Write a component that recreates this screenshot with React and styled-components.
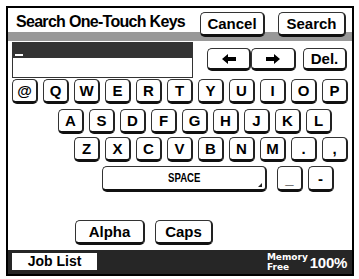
import React from "react";
import styled, { createGlobalStyle } from "styled-components";

const Global = createGlobalStyle`
  html, body { margin: 0; padding: 0; background: #fff; }
  body { font-family: "Liberation Sans", Arial, sans-serif; }
`;

const Frame = styled.div`
  position: relative;
  margin: 6px 0 0 6px;
  width: 344px;
  height: 266px;
  border: 2px solid #000;
  background: #fff;
  display: flex;
  flex-direction: column;
`;

const Header = styled.div`
  display: grid;
  flex-shrink: 0;
  height: 33px;
  grid-template-columns: 1fr 65px 13px 68px 6px;
  grid-template-rows: 24px 9px;
`;

const Stripe = styled.div`
  grid-row: 2;
  grid-column: 1 / -1;
  height: 9px;
  background-color: #999999;
`;

const Title = styled.div`
  grid-row: 1;
  grid-column: 1;
  font-weight: bold;
  font-size: 16px;
  letter-spacing: -0.7px;
  margin: 5px 0 0 8px;
  white-space: nowrap;
`;

const Btn = styled.div`
  box-sizing: border-box;
  flex-shrink: 0;
  width: ${(p) => p.w}px;
  height: ${(p) => p.h || 25}px;
  margin-left: ${(p) => p.ml || 0}px;
  margin-top: ${(p) => p.mt || 0}px;
  background: #fff;
  border: 1px solid #333;
  border-bottom: 3px solid #111;
  border-right: 2px solid #222;
  border-radius: 5px;
  display: flex;
  align-items: center;
  justify-content: center;
  font-weight: bold;
  font-size: ${(p) => p.fs || 15}px;
  color: #000;
  position: relative;
  z-index: 1;
`;

const HeadBtn = styled(Btn)`
  grid-row: 1 / 3;
  grid-column: ${(p) => p.col};
  align-self: start;
`;

const InputRow = styled.div`
  display: flex;
  margin-top: 1px;
`;

const Field = styled.div`
  margin-left: 4px;
  width: 181px;
  display: flex;
  flex-direction: column;
`;

const FieldTop = styled.div`
  height: 16px;
  background: #333;
  position: relative;
`;

const Cursor = styled.div`
  position: absolute;
  left: 3px;
  bottom: 2px;
  width: 8px;
  height: 2px;
  background: #fff;
`;

const FieldBody = styled.div`
  box-sizing: border-box;
  height: 20px;
  border: 1px solid #333;
  border-top: none;
  background: #fff;
`;

const Arrows = styled.div`
  display: flex;
  margin-left: 14px;
  margin-top: 6px;
`;

const Row = styled.div`
  display: flex;
  gap: 5px;
  padding-left: ${(p) => p.pl}px;
  margin-top: ${(p) => p.mt}px;
`;

const Corner = styled.div`
  position: absolute;
  right: 3px;
  bottom: 2px;
  width: 0;
  height: 0;
  border-left: 4px solid transparent;
  border-bottom: 4px solid #222;
`;

const SpaceLabel = styled.span`
  font-size: 12px;
  font-weight: bold;
  transform: scaleX(0.8);
`;

const Bottom = styled.div`
  margin-top: auto;
  height: 24px;
  background: #262626;
  display: flex;
  align-items: center;
  padding: 0 5px 0 4px;
`;

const JobList = styled.div`
  width: 85px;
  height: 17px;
  background: #fff;
  color: #000;
  font-weight: bold;
  font-size: 14px;
  display: flex;
  align-items: center;
  justify-content: center;
  margin-top: -2px;
`;

const Mem = styled.div`
  margin-left: auto;
  color: #fff;
  font-family: "DejaVu Sans", Verdana, sans-serif;
  font-size: 9px;
  font-weight: bold;
  line-height: 10px;
  margin-right: 2px;
`;

const Pct = styled.div`
  color: #fff;
  font-weight: bold;
  font-size: 15px;
  letter-spacing: -0.3px;
`;

const Arrow = ({ dir }) => (
  <svg width="14" height="10" viewBox="0 0 14 10" style={{ transform: dir === "r" ? "scaleX(-1)" : "none" }}>
    <polygon points="0,5 6,0 6,3 14,3 14,7 6,7 6,10" fill="#000" />
  </svg>
);

const r1 = ["@", "Q", "W", "E", "R", "T", "Y", "U", "I", "O", "P"];
const r2 = ["A", "S", "D", "F", "G", "H", "J", "K", "L"];
const r3 = ["Z", "X", "C", "V", "B", "N", "M", ".", ","];

export default function App() {
  return (
    <>
      <Global />
      <Frame>
        <Header>
          <Title>Search One-Touch Keys</Title>
          <Stripe />
          <HeadBtn col={2} w={65} mt={4}>Cancel</HeadBtn>
          <HeadBtn col={4} w={68} mt={4}>Search</HeadBtn>
        </Header>
        <InputRow>
          <Field>
            <FieldTop><Cursor /></FieldTop>
            <FieldBody />
          </Field>
          <Arrows>
            <Btn w={44} h={23}><Arrow dir="l" /></Btn>
            <Btn w={45} h={23}><Arrow dir="r" /></Btn>
            <Btn w={44} h={23} ml={7}>Del.</Btn>
          </Arrows>
        </InputRow>
        <Row pl={4} mt={1}>
          {r1.map((k) => <Btn key={k} w={26}>{k}</Btn>)}
        </Row>
        <Row pl={50} mt={5}>
          {r2.map((k) => <Btn key={k} w={26}>{k}</Btn>)}
        </Row>
        <Row pl={66} mt={3}>
          {r3.map((k) => <Btn key={k} w={26}>{k}</Btn>)}
        </Row>
        <Row pl={94} mt={4}>
          <Btn w={165} h={26}><SpaceLabel>SPACE</SpaceLabel><Corner /></Btn>
          <Btn w={26} h={26} ml={5}>_</Btn>
          <Btn w={26} h={26}>-</Btn>
        </Row>
        <Row pl={67} mt={28}>
          <Btn w={70}>Alpha</Btn>
          <Btn w={58} ml={5}>Caps</Btn>
        </Row>
        <Bottom>
          <JobList>Job List</JobList>
          <Mem>Memory<br />Free</Mem>
          <Pct>100%</Pct>
        </Bottom>
      </Frame>
    </>
  );
}
